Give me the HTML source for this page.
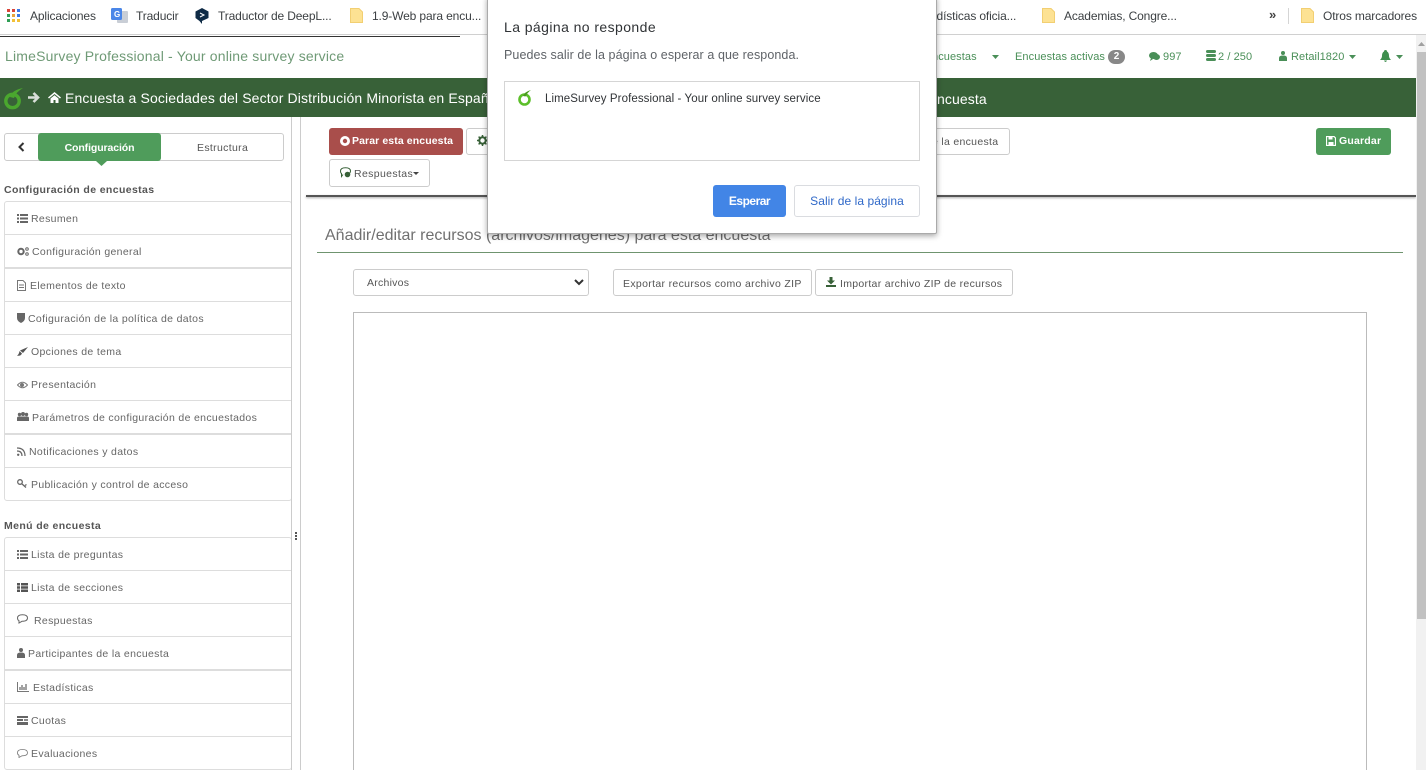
<!DOCTYPE html>
<html lang="es">
<head>
<meta charset="utf-8">
<title>LimeSurvey</title>
<style>
html,body{margin:0;padding:0;width:1426px;height:770px;overflow:hidden;background:#fff}
body{position:relative;font-family:"Liberation Sans",sans-serif}
.t{position:absolute;white-space:nowrap;line-height:16px}
.b{position:absolute;box-sizing:border-box;background:#fff;border:1px solid #ccc;border-radius:3px}
.bm{font-size:12px;color:#3c4043;letter-spacing:-.13px}
.nav{font-size:11px;color:#4a8f58;letter-spacing:.08px;margin-top:1px}
.side{font-size:10.5px;color:#666;letter-spacing:.33px;margin-top:1px}
.hd{font-size:10.5px;font-weight:bold;color:#555;letter-spacing:.38px;margin-top:1px}
.sep{position:absolute;left:5px;width:286px;height:1px;background:#ddd}
.thick{height:2px;background:#ddd}
svg{position:absolute;display:block}
</style>
</head>
<body>

<!-- bookmarks bar -->
<div style="position:absolute;left:0;top:34px;width:1426px;height:1px;background:#d0d0d0"></div>
<div style="position:absolute;left:0;top:36px;width:460px;height:1px;background:#333"></div>
<svg style="left:7px;top:9px" width="13" height="13" viewBox="0 0 13 13">
<rect x="0" y="0" width="3" height="3" fill="#d9453a"/><rect x="5" y="0" width="3" height="3" fill="#d9453a"/><rect x="10" y="0" width="3" height="3" fill="#3b78e7"/>
<rect x="0" y="5" width="3" height="3" fill="#2f9e55"/><rect x="5" y="5" width="3" height="3" fill="#e8a33b"/><rect x="10" y="5" width="3" height="3" fill="#3b78e7"/>
<rect x="0" y="10" width="3" height="3" fill="#2f9e55"/><rect x="5" y="10" width="3" height="3" fill="#f2c037"/><rect x="10" y="10" width="3" height="3" fill="#f2c037"/>
</svg>
<div class="t bm" style="left:30px;top:8px">Aplicaciones</div>
<svg style="left:111px;top:7px" width="17" height="17" viewBox="0 0 17 17">
<rect x="6" y="4" width="11" height="12" rx="1" fill="#c9ced6"/><rect x="0" y="1" width="11" height="12" rx="1.5" fill="#4a86e8"/>
<text x="3" y="10" font-size="8" font-weight="bold" fill="#fff" font-family="Liberation Sans">G</text>
</svg>
<div class="t bm" style="left:136px;top:8px">Traducir</div>
<svg style="left:195px;top:8px" width="14" height="16" viewBox="0 0 14 16">
<path d="M7 0 L13.5 3.5 V10 L7 13 V16 L4.5 13 L.5 10 V3.5Z" fill="#0f2b46"/>
<path d="M5 5 L9 7 L5 9" fill="none" stroke="#fff" stroke-width="1"/>
</svg>
<div class="t bm" style="left:218px;top:8px">Traductor de DeepL...</div>
<svg style="left:350px;top:8px" width="13" height="15" viewBox="0 0 13 15"><path d="M.5.5H9L12.5 4V14.5H.5Z" fill="#fde293" stroke="#f2cf72"/></svg>
<div class="t bm" style="left:372px;top:8px">1.9-Web para encu...</div>
<div class="t bm" style="left:930px;top:8px">adísticas oficia...</div>
<svg style="left:1042px;top:8px" width="13" height="15" viewBox="0 0 13 15"><path d="M.5.5H9L12.5 4V14.5H.5Z" fill="#fde293" stroke="#f2cf72"/></svg>
<div class="t bm" style="left:1064px;top:8px">Academias, Congre...</div>
<div class="t" style="left:1269px;top:7px;font-size:13px;color:#444;font-weight:bold">»</div>
<div style="position:absolute;left:1288px;top:8px;width:1px;height:16px;background:#d5d5d5"></div>
<svg style="left:1301px;top:8px" width="13" height="15" viewBox="0 0 13 15"><path d="M.5.5H9L12.5 4V14.5H.5Z" fill="#fde293" stroke="#f2cf72"/></svg>
<div class="t bm" style="left:1323px;top:8px">Otros marcadores</div>

<!-- top nav -->
<div class="t" style="left:5px;top:48px;font-size:14px;color:#6f9a76;letter-spacing:.18px">LimeSurvey Professional - Your online survey service</div>
<div class="t nav" style="left:932px;top:48px">ncuestas</div>
<svg style="left:992px;top:55px" width="7" height="4"><path d="M0 0H7L3.500 4Z" fill="#4a8f58"/></svg>
<div class="t nav" style="left:1015px;top:48px">Encuestas activas</div>
<div style="position:absolute;left:1108px;top:50px;width:17px;height:14px;border-radius:8px;background:#888;color:#fff;font-size:10px;font-weight:bold;text-align:center;line-height:14px">2</div>
<svg style="left:1149px;top:52px" width="11" height="9" viewBox="0 0 11 9"><ellipse cx="4.500" cy="3.500" rx="4.500" ry="3.500" fill="#4a8f58"/><ellipse cx="7.500" cy="5" rx="3.500" ry="3" fill="#4a8f58"/><path d="M2 6L1 9L4 7Z" fill="#4a8f58"/></svg>
<div class="t nav" style="left:1163px;top:48px">997</div>
<svg style="left:1206px;top:50px" width="10" height="12" viewBox="0 0 10 12"><rect y="0" width="10" height="3" rx="1.500" fill="#4a8f58"/><rect y="4" width="10" height="3" rx="1.500" fill="#4a8f58"/><rect y="8" width="10" height="3" rx="1.500" fill="#4a8f58"/></svg>
<div class="t nav" style="left:1218px;top:48px">2 / 250</div>
<svg style="left:1279px;top:51px" width="8" height="10" viewBox="0 0 8 10"><circle cx="4" cy="2" r="2" fill="#4a8f58"/><path d="M0 10V7Q0 4.500 4 4.500T8 7V10Z" fill="#4a8f58"/></svg>
<div class="t nav" style="left:1291px;top:48px">Retail1820</div>
<svg style="left:1349px;top:55px" width="7" height="4"><path d="M0 0H7L3.500 4Z" fill="#4a8f58"/></svg>
<svg style="left:1380px;top:50px" width="11" height="12" viewBox="0 0 11 12"><path d="M5.500 0Q7 0 7 1.500Q9 2.500 9 6Q9 8 11 10H0Q2 8 2 6Q2 2.500 4 1.500Q4 0 5.500 0ZM4 10.500H7Q6.500 12 5.500 12T4 10.500Z" fill="#3f8f4e"/></svg>
<svg style="left:1396px;top:55px" width="7" height="4"><path d="M0 0H7L3.500 4Z" fill="#4a8f58"/></svg>

<!-- green bar -->
<div style="position:absolute;left:0;top:78px;width:1416px;height:39px;background:#386138"></div>
<svg style="left:3px;top:87px" width="21" height="24" viewBox="0 0 21 24">
<circle cx="9.500" cy="14" r="6.700" fill="none" stroke="#4aa72e" stroke-width="3.400"/>
<path d="M7 10Q9 3 20 1Q13 5 11 11Z" fill="#4aa72e"/>
</svg>
<svg style="left:27px;top:91px" width="13" height="13" viewBox="0 0 13 13"><path d="M1 6.500H11M6.500 2L11 6.500L6.500 11" fill="none" stroke="#d9dfd9" stroke-width="2.600"/></svg>
<svg style="left:48px;top:92px" width="13" height="11" viewBox="0 0 13 11"><path d="M6.500 0L13 5.500L12 6.500L6.500 2L1 6.500L0 5.500ZM2.500 6.500L6.500 3.200L10.500 6.500V11H7.500V8H5.500V11H2.500Z" fill="#fff"/></svg>
<div class="t" style="left:65px;top:90px;font-size:14px;color:#fff;letter-spacing:.14px;width:423px;overflow:hidden">Encuesta a Sociedades del Sector Distribución Minorista en España</div>
<div class="t" style="left:937px;top:91px;font-size:14px;color:#fff;letter-spacing:.1px">ncuesta</div>

<!-- sidebar tabs -->
<div class="b" style="left:4px;top:133px;width:280px;height:28px"></div>
<svg style="left:18px;top:142px" width="7" height="10" viewBox="0 0 7 10"><path d="M5.500 1L1.500 5L5.500 9" fill="none" stroke="#333" stroke-width="2"/></svg>
<div style="position:absolute;left:38px;top:133px;width:123px;height:28px;background:#4f9c5b;border-radius:3px;color:#fff;font-size:10.5px;font-weight:bold;text-align:center;line-height:30px;letter-spacing:-.1px">Configuración</div>
<svg style="left:96px;top:161px" width="11" height="5"><path d="M0 0H11L5.500 5Z" fill="#4f9c5b"/></svg>
<div class="t side" style="left:197px;top:139px;color:#555">Estructura</div>

<!-- sidebar lists -->
<div class="t hd" style="left:4px;top:181px">Configuración de encuestas</div>
<div class="b" style="left:4px;top:201px;width:288px;height:300px;border-color:#ddd"></div>
<div class="sep" style="top:234px"></div><div class="sep thick" style="top:267px"></div><div class="sep" style="top:301px"></div><div class="sep" style="top:334px"></div><div class="sep" style="top:367px"></div><div class="sep" style="top:400px"></div><div class="sep thick" style="top:433px"></div><div class="sep" style="top:467px"></div>

<svg style="left:17px;top:214px" width="11" height="9" viewBox="0 0 11 9"><path d="M0 0H2V2H0ZM3 0H11V2H3ZM0 3.500H2V5.500H0ZM3 3.500H11V5.500H3ZM0 7H2V9H0ZM3 7H11V9H3Z" fill="#666"/></svg>
<div class="t side" style="left:31px;top:210px">Resumen</div>
<svg style="left:17px;top:247px" width="12" height="9" viewBox="0 0 12 9"><circle cx="4" cy="4.500" r="2.700" fill="none" stroke="#666" stroke-width="2"/><circle cx="10" cy="2" r="1.300" fill="none" stroke="#666"/><circle cx="10" cy="7" r="1.300" fill="none" stroke="#666"/></svg>
<div class="t side" style="left:32px;top:243px">Configuración general</div>
<svg style="left:17px;top:280px" width="9" height="11" viewBox="0 0 9 11"><path d="M.5.500H6L8.500 3V10.500H.5Z M2 5H7M2 7.500H7" fill="none" stroke="#777"/></svg>
<div class="t side" style="left:30px;top:277px">Elementos de texto</div>
<svg style="left:17px;top:313px" width="8" height="10" viewBox="0 0 8 10"><path d="M0 0H8V5Q8 8 4 10Q0 8 0 5Z" fill="#666"/></svg>
<div class="t side" style="left:28px;top:310px">Cofiguración de la política de datos</div>
<svg style="left:17px;top:347px" width="11" height="9" viewBox="0 0 11 9"><path d="M11 0L6 6L3 3.500ZM2.500 4L5 6.500Q3.500 9.500 0 8.500Q2 7.500 2.500 4Z" fill="#555"/></svg>
<div class="t side" style="left:31px;top:343px">Opciones de tema</div>
<svg style="left:17px;top:381px" width="11" height="8" viewBox="0 0 11 8"><path d="M.5 4Q5.500-1.500 10.500 4Q5.500 9.500.5 4Z" fill="none" stroke="#777"/><circle cx="5" cy="4" r="2" fill="#777"/></svg>
<div class="t side" style="left:31px;top:376px">Presentación</div>
<svg style="left:17px;top:412px" width="12" height="10" viewBox="0 0 12 10"><circle cx="2.500" cy="2.500" r="1.700" fill="#666"/><circle cx="6" cy="2" r="2" fill="#666"/><circle cx="9.500" cy="2.500" r="1.700" fill="#666"/><path d="M0 9V6Q0 4.500 2 4.500H10Q12 4.500 12 6V9Z" fill="#666"/></svg>
<div class="t side" style="left:32px;top:409px">Parámetros de configuración de encuestados</div>
<svg style="left:17px;top:447px" width="9" height="9" viewBox="0 0 9 9"><path d="M0 1Q8 1 8 9M0 4Q5 4 5 9" fill="none" stroke="#666" stroke-width="1.200"/><circle cx="1.200" cy="7.800" r="1.200" fill="#666"/></svg>
<div class="t side" style="left:29px;top:443px">Notificaciones y datos</div>
<svg style="left:17px;top:479px" width="11" height="9" viewBox="0 0 11 9"><circle cx="3" cy="3" r="2.300" fill="none" stroke="#666" stroke-width="1.300"/><path d="M4.500 4.500L9 8.500M8 6.500L9.500 5.500" stroke="#666" stroke-width="1.300" fill="none"/></svg>
<div class="t side" style="left:31px;top:476px">Publicación y control de acceso</div>

<div class="t hd" style="left:4px;top:517px">Menú de encuesta</div>
<div class="b" style="left:4px;top:537px;width:288px;height:233px;border-color:#ddd;border-radius:3px"></div>
<div class="sep" style="top:570px"></div><div class="sep" style="top:603px"></div><div class="sep" style="top:636px"></div><div class="sep thick" style="top:669px"></div><div class="sep" style="top:703px"></div><div class="sep" style="top:736px"></div>

<svg style="left:17px;top:550px" width="11" height="9" viewBox="0 0 11 9"><path d="M0 0H2V2H0ZM3 0H11V2H3ZM0 3.500H2V5.500H0ZM3 3.500H11V5.500H3ZM0 7H2V9H0ZM3 7H11V9H3Z" fill="#666"/></svg>
<div class="t side" style="left:31px;top:546px">Lista de preguntas</div>
<svg style="left:17px;top:583px" width="11" height="9" viewBox="0 0 11 9"><path d="M0 0H3V2.500H0ZM4 0H11V2.500H4ZM0 3.300H3V5.800H0ZM4 3.300H11V5.800H4ZM0 6.500H3V9H0ZM4 6.500H11V9H4Z" fill="#555"/></svg>
<div class="t side" style="left:31px;top:579px">Lista de secciones</div>
<svg style="left:17px;top:614px" width="11" height="10" viewBox="0 0 11 10"><path d="M5.500.7Q10.500.7 10.500 4Q10.500 7.300 5 7.300L2 9V6.700Q.5 6 .5 4Q.5.700 5.500.7Z" fill="none" stroke="#666"/></svg>
<div class="t side" style="left:34px;top:612px">Respuestas</div>
<svg style="left:17px;top:648px" width="8" height="10" viewBox="0 0 8 10"><circle cx="4" cy="2" r="2" fill="#666"/><path d="M0 10V7Q0 4.500 4 4.500T8 7V10Z" fill="#666"/></svg>
<div class="t side" style="left:28px;top:645px">Participantes de la encuesta</div>
<svg style="left:17px;top:682px" width="12" height="10" viewBox="0 0 12 10"><path d="M.5 0V9.500H12" fill="none" stroke="#777"/><path d="M3 5V8M5 3V8M7 5V8M9 2V8" stroke="#666" stroke-width="1.200"/></svg>
<div class="t side" style="left:33px;top:679px">Estadísticas</div>
<svg style="left:17px;top:716px" width="11" height="9" viewBox="0 0 11 9"><rect width="11" height="2" fill="#666"/><rect y="3" width="6" height="2" fill="#666"/><rect x="7" y="3" width="4" height="2" fill="#888"/><rect y="6" width="11" height="3" fill="#666"/></svg>
<div class="t side" style="left:31px;top:712px">Cuotas</div>
<svg style="left:17px;top:749px" width="11" height="9" viewBox="0 0 11 9"><path d="M5.500.5Q10.500.5 10.500 3.700Q10.500 6.800 5 6.800L2 8.500V6.300Q.5 5.700.5 3.700Q.5.500 5.500.5Z" fill="none" stroke="#777" stroke-width=".8"/></svg>
<div class="t side" style="left:31px;top:745px">Evaluaciones</div>

<!-- splitter -->
<div style="position:absolute;left:291px;top:117px;width:1px;height:653px;background:#ccc"></div>
<div style="position:absolute;left:300px;top:117px;width:1px;height:653px;background:#ccc"></div>
<svg style="left:295px;top:532px" width="2" height="8"><rect width="2" height="2" fill="#555"/><rect y="3" width="2" height="2" fill="#555"/><rect y="6" width="2" height="2" fill="#555"/></svg>

<!-- toolbar -->
<div style="position:absolute;left:329px;top:128px;width:134px;height:27px;background:#a94e4b;border-radius:3px"></div>
<svg style="left:340px;top:136px" width="10" height="10" viewBox="0 0 10 10"><circle cx="5" cy="5" r="5" fill="#fff"/><circle cx="5" cy="5" r="2.200" fill="#a94e4b"/></svg>
<div class="t" style="left:352px;top:133px;font-size:10.5px;font-weight:bold;color:#fff;letter-spacing:.1px">Parar esta encuesta</div>
<div class="b" style="left:466px;top:128px;width:40px;height:27px"></div>
<svg style="left:477px;top:135px" width="11" height="11" viewBox="0 0 11 11"><circle cx="5.500" cy="5.500" r="3.200" fill="none" stroke="#386138" stroke-width="2"/><path d="M5.500 0V2M5.500 9V11M0 5.500H2M9 5.500H11M1.600 1.600L3 3M8 8L9.400 9.400M1.600 9.400L3 8M8 3L9.400 1.600" stroke="#386138" stroke-width="1.500"/></svg>
<div class="b" style="left:900px;top:128px;width:110px;height:27px"></div>
<div class="t" style="left:932px;top:134px;font-size:10.5px;color:#555;letter-spacing:.3px">e la encuesta</div>
<div style="position:absolute;left:1316px;top:128px;width:75px;height:27px;background:#4f9c5b;border-radius:3px"></div>
<svg style="left:1326px;top:136px" width="10" height="10" viewBox="0 0 10 10"><path d="M.5.500H8L9.500 2V9.500H.5Z" fill="none" stroke="#fff" stroke-width="1.200"/><rect x="2.500" y=".5" width="4" height="3" fill="#fff"/><rect x="2.500" y="6" width="5" height="3.500" fill="#fff"/></svg>
<div class="t" style="left:1339px;top:133px;font-size:10.5px;font-weight:bold;color:#fff;letter-spacing:.2px">Guardar</div>
<div class="b" style="left:329px;top:159px;width:101px;height:28px"></div>
<svg style="left:340px;top:167px" width="11" height="11" viewBox="0 0 11 11"><path d="M5.500.7Q10.500.7 10.500 4Q10.500 6 8.500 6.700M3 7.500L1.500 9.500V6.500Q.5 6 .5 4Q.5.700 5.500.7" fill="none" stroke="#386138"/><circle cx="7.500" cy="7.500" r="2.800" fill="#386138"/></svg>
<div class="t" style="left:354px;top:166px;font-size:10.5px;color:#555;letter-spacing:.36px">Respuestas</div>
<svg style="left:413px;top:172px" width="6" height="3"><path d="M0 0H6L3 3Z" fill="#444"/></svg>
<div style="position:absolute;left:306px;top:195px;width:1110px;height:2px;background:#555;box-shadow:0 1px 2px rgba(0,0,0,.35)"></div>

<!-- content -->
<div class="t" style="left:325px;top:227px;font-size:16px;color:#707070;line-height:18px">Añadir/editar recursos (archivos/imágenes) para esta encuesta</div>
<div style="position:absolute;left:317px;top:252px;width:1086px;height:1px;background:#6f946f"></div>

<div class="b" style="left:353px;top:269px;width:236px;height:27px"></div>
<div class="t" style="left:367px;top:275px;font-size:10.5px;color:#555;letter-spacing:.25px">Archivos</div>
<svg style="left:574px;top:279px" width="10" height="7" viewBox="0 0 10 7"><path d="M1 1L5 5L9 1" fill="none" stroke="#333" stroke-width="2"/></svg>
<div class="b" style="left:613px;top:269px;width:199px;height:27px"></div>
<div class="t" style="left:623px;top:276px;font-size:10.5px;color:#555;letter-spacing:.33px">Exportar recursos como archivo ZIP</div>
<div class="b" style="left:815px;top:269px;width:198px;height:27px"></div>
<svg style="left:826px;top:277px" width="10" height="10" viewBox="0 0 10 10"><path d="M3.500 0H6.500V3.500H9L5 7.500L1 3.500H3.500ZM0 8H10V10H0Z" fill="#386138"/></svg>
<div class="t" style="left:840px;top:276px;font-size:10.5px;color:#555;letter-spacing:.3px">Importar archivo ZIP de recursos</div>
<div style="position:absolute;box-sizing:border-box;left:353px;top:312px;width:1014px;height:470px;border:1px solid #bbb"></div>

<!-- scrollbar -->
<div style="position:absolute;left:1416px;top:35px;width:10px;height:735px;background:#f1f1f1"></div>
<div style="position:absolute;left:1417px;top:52px;width:9px;height:567px;background:#c1c1c1"></div>
<svg style="left:1418px;top:42px" width="7" height="4"><path d="M3.500 0L7 4H0Z" fill="#a0a0a0"/></svg>

<!-- dialog -->
<div style="position:absolute;box-sizing:border-box;left:487px;top:-4px;width:450px;height:238px;background:#fff;border:1px solid #aaa;border-radius:2px;box-shadow:0 2px 6px rgba(0,0,0,.35)"></div>
<div class="t" style="left:504px;top:18px;font-size:14px;color:#303336;letter-spacing:.42px;line-height:18px">La página no responde</div>
<div class="t" style="left:504px;top:47px;font-size:12.5px;color:#5f6368;letter-spacing:.09px">Puedes salir de la página o esperar a que responda.</div>
<div style="position:absolute;box-sizing:border-box;left:504px;top:81px;width:416px;height:80px;border:1px solid #d5d5d5"></div>
<svg style="left:517px;top:89px" width="16" height="18" viewBox="0 0 16 18"><circle cx="7.500" cy="10.500" r="5" fill="none" stroke="#5cbf2a" stroke-width="2.600"/><path d="M6 7Q8 2.500 14 1Q10.500 3.500 8.500 7.500Z" fill="#4a9a20"/></svg>
<div class="t" style="left:545px;top:91px;font-size:11.5px;color:#303336;letter-spacing:.09px">LimeSurvey Professional - Your online survey service</div>
<div style="position:absolute;left:713px;top:185px;width:73px;height:32px;background:#4285e6;border-radius:3px;color:#fff;font-size:12px;font-weight:bold;text-align:center;line-height:32px;letter-spacing:-.5px">Esperar</div>
<div style="position:absolute;box-sizing:border-box;left:794px;top:185px;width:126px;height:32px;border:1px solid #dadce0;border-radius:3px;color:#2f68c8;font-size:12px;text-align:center;line-height:30px;letter-spacing:.05px;background:#fff">Salir de la página</div>

</body>
</html>
